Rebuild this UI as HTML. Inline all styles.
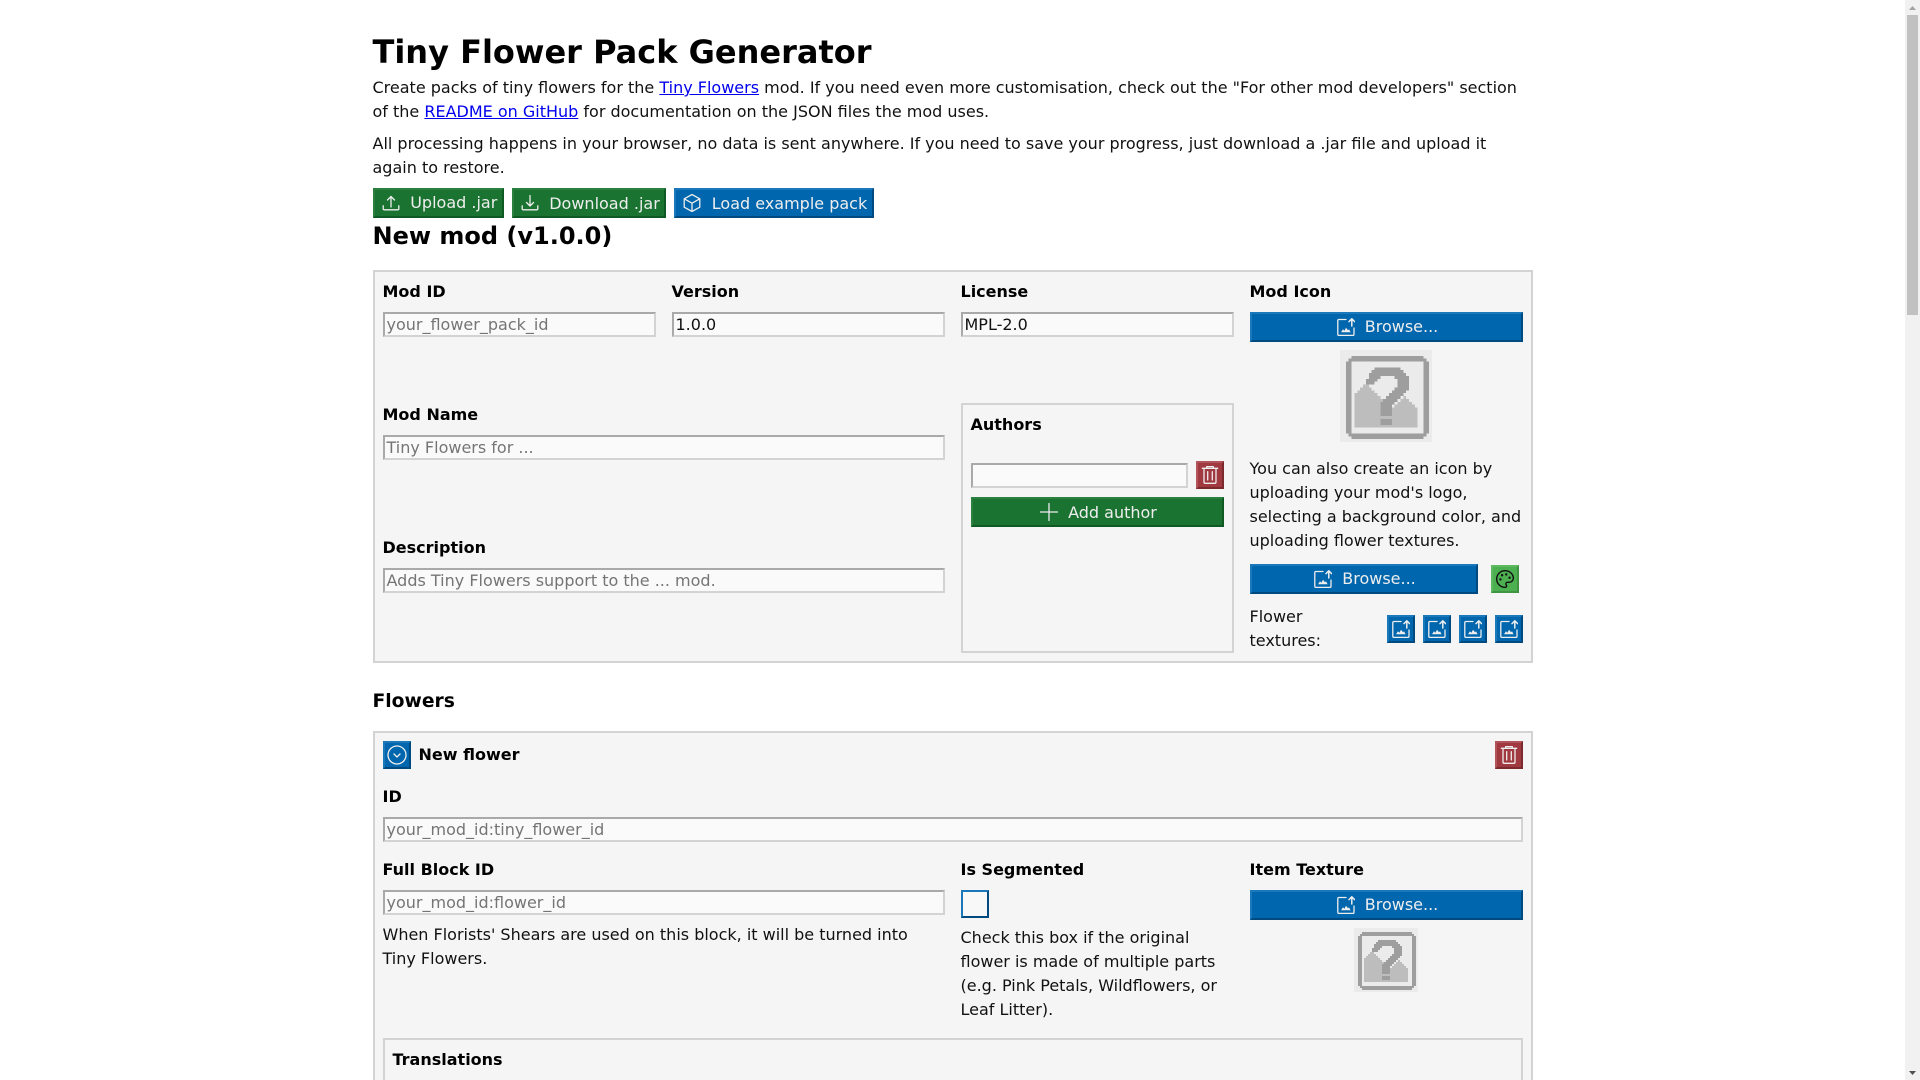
<!DOCTYPE html>
<html lang="en">
<head>
<meta charset="utf-8">
<title>Tiny Flower Pack Generator</title>
<style>
html,body{margin:0;padding:0;width:1920px;height:1080px;overflow:hidden;background:#fff}
body{font-family:"DejaVu Sans","Liberation Sans",sans-serif;font-size:16px;line-height:24px;color:#111;position:relative}
#c{position:absolute;left:372.5px;top:0;width:1160px;height:1080px}
#c>div,.p>div,.a{position:absolute;white-space:nowrap}
.b{font-weight:700;color:#000}
.p{box-sizing:border-box;border:2px solid #d3d3d3;background:#f5f5f5;position:absolute}
.i{box-sizing:border-box;height:25px;border:2px solid;border-color:#a9a9a9 #d3d3d3 #d3d3d3 #a9a9a9;background:#fafafa;padding-left:2px;line-height:21px;color:#757575}
.v{color:#111}
.btn{box-sizing:border-box;display:flex;align-items:center;justify-content:center;gap:10px;padding-left:3px;height:30px;border:2px solid;color:#eee;line-height:24px}
.g{background:#1b7331;border-color:#2b8040 #0e5a22 #0e5a22 #2b8040}
.bl{background:#0066ad;border-color:#1a78bb #004a80 #004a80 #1a78bb}
.r{background:#a13a40;border-color:#b2545a #7d2a2f #7d2a2f #b2545a}
.lg{background:#4caf50;border-color:#5dba61 #3f9543 #3f9543 #5dba61}
.sq{width:28px;height:28px;gap:0;padding:0}
.dn{position:relative;top:1px}
svg{display:block;flex:none}
.st{fill:none;stroke:#eee;stroke-width:1.3;stroke-linecap:round;stroke-linejoin:round}
a{color:#00e}
#sb{position:absolute;left:1905px;top:0;width:15px;height:1080px;background:#f1f1f1}
</style>
</head>
<body>
<svg width="0" height="0" style="position:absolute">
<defs>
<symbol id="ph" viewBox="0 0 32 32" shape-rendering="crispEdges">
<rect width="32" height="32" fill="#ebebeb"/>
<path fill="#bdbdbd" d="M5 27V15H6V14H7V13H8V12H10V13H11V14H12V15H13V16H14V17H15V18H16V19H17V20H19V19H20V18H21V17H22V16H23V17H24V18H25V19H26V20H27V27Z"/>
<path fill="#9e9e9e" fill-rule="evenodd" d="M4 2H29V3H30V4H31V29H30V30H29V31H4V30H3V29H2V4H3V3H4ZM4 4V29H29V4Z"/>
<path fill="#9e9e9e" d="M12 6h9v1h-9zM11 7h11v1h-11zM10 8h13v1h-13zM10 9h4v1h-4zM19 9h5v1h-5zM9 10h4v1h-4zM20 10h4v1h-4zM9 11h3v1h-3zM20 11h4v1h-4zM20 12h4v1h-4zM19 13h5v1h-5zM18 14h5v1h-5zM17 15h5v1h-5zM16 16h5v1h-5zM15 17h5v1h-5zM14 18h5v1h-5zM14 19h4v4h-4zM14 24h4v2h-4z"/>
</symbol>
<symbol id="up" viewBox="0 0 18 18">
<path class="st" d="M9 1.500H1.800a1 1 0 0 0-1 1V16.400a1 1 0 0 0 1 1H16a1 1 0 0 0 1-1V10"/>
<path class="st" style="stroke-width:1.5" d="M14.800 8V.8M12 3.600L14.800 .8l2.800 2.800"/>
<path fill="#eee" d="M4 14.200l2-3 1.400 1.600 1.600-3 2 2.500 1-1 1.600 2.900z"/>
</symbol>
<symbol id="tr" viewBox="0 0 24 24">
<path class="st" d="M4.300 5.300H19.700M8.700 5.300V3.600h6.600v1.700M6 5.300V19a1.300 1.300 0 0 0 1.300 1.300h9.400A1.300 1.300 0 0 0 18 19V5.300M9.700 8.700V17M14.300 8.700V17"/>
</symbol>
</defs>
</svg>

<div id="c">
<div class="b" style="left:0;top:33px;font-size:32px;line-height:38px">Tiny Flower Pack Generator</div>
<div style="left:0;top:76px">Create packs of tiny flowers for the <a href="#">Tiny Flowers</a> mod. If you need even more customisation, check out the "For other mod developers" section</div>
<div style="left:0;top:100px">of the <a href="#">README on GitHub</a> for documentation on the JSON files the mod uses.</div>
<div style="left:0;top:132px">All processing happens in your browser, no data is sent anywhere. If you need to save your progress, just download a .jar file and upload it</div>
<div style="left:0;top:156px">again to restore.</div>

<div class="btn g" style="left:0;top:188px;width:131.5px;"><svg width="18" height="18" viewBox="0 0 18 18"><path class="st" d="M9 13V2.500M5.500 6L9 2.500 12.500 6M1.200 11.800v3a1 1 0 0 0 1 1h13.600a1 1 0 0 0 1-1v-3"/></svg><span>Upload .jar</span></div>
<div class="btn g" style="left:139.5px;top:188px;width:154px"><svg width="18" height="18" viewBox="0 0 18 18"><path class="st" d="M9 1.500V12M5.500 8.500L9 12l3.500-3.500M1.200 11.800v3a1 1 0 0 0 1 1h13.600a1 1 0 0 0 1-1v-3"/></svg><span class="dn">Download .jar</span></div>
<div class="btn bl" style="left:301.5px;top:188px;width:200px"><svg width="18" height="18" viewBox="0 0 18 18" style="position:relative;left:-1px"><path class="st" d="M9 .5L16.800 4.800V13.200L9 17.500 1.200 13.200V4.800ZM1.200 4.800L9 9.200 16.800 4.800M9 9.200V17.500"/></svg><span class="dn">Load example pack</span></div>

<div class="b" style="left:0;top:222px;font-size:24px;line-height:28px">New mod (v1.0.0)</div>

<div class="p" style="left:0;top:270px;width:1160px;height:393px"></div>
<div class="b" style="left:10px;top:280px">Mod ID</div>
<div class="b" style="left:299px;top:280px">Version</div>
<div class="b" style="left:588px;top:280px">License</div>
<div class="b" style="left:877px;top:280px">Mod Icon</div>
<div class="i" style="left:10px;top:312px;width:273px">your_flower_pack_id</div>
<div class="i v" style="left:299px;top:312px;width:273px">1.0.0</div>
<div class="i v" style="left:588px;top:312px;width:273px">MPL-2.0</div>
<div class="btn bl" style="left:877px;top:312px;width:273px"><svg width="18" height="18"><use href="#up"/></svg><span>Browse...</span></div>
<svg class="a" style="position:absolute;left:967px;top:350px" width="92" height="92"><use href="#ph"/></svg>
<div style="left:877px;top:457px">You can also create an icon by</div>
<div style="left:877px;top:481px">uploading your mod's logo,</div>
<div style="left:877px;top:505px">selecting a background color, and</div>
<div style="left:877px;top:529px">uploading flower textures.</div>
<div class="btn bl" style="left:877px;top:564px;width:228px"><svg width="18" height="18"><use href="#up"/></svg><span>Browse...</span></div>
<div class="btn lg sq" style="left:1118.5px;top:565px"><svg width="20" height="20" viewBox="0 0 24 24" fill="none" stroke="#111" stroke-width="1.7" stroke-linecap="round" stroke-linejoin="round"><path d="M12 22a1 1 0 0 1 0-20 10 9 0 0 1 10 9 5 5 0 0 1-5 5h-2.250a1.750 1.750 0 0 0-1.400 2.800l.3.4a1.750 1.750 0 0 1-1.400 2.800z"/><circle cx="13.500" cy="6.500" r=".6" fill="#111"/><circle cx="17.500" cy="10.500" r=".6" fill="#111"/><circle cx="6.500" cy="12.500" r=".6" fill="#111"/><circle cx="8.500" cy="7.500" r=".6" fill="#111"/></svg></div>
<div style="left:877px;top:605px">Flower</div>
<div style="left:877px;top:629px">textures:</div>
<div class="btn bl sq" style="left:1014.5px;top:615px"><svg width="18" height="18"><use href="#up"/></svg></div>
<div class="btn bl sq" style="left:1050.5px;top:615px"><svg width="18" height="18"><use href="#up"/></svg></div>
<div class="btn bl sq" style="left:1086.5px;top:615px"><svg width="18" height="18"><use href="#up"/></svg></div>
<div class="btn bl sq" style="left:1122.5px;top:615px"><svg width="18" height="18"><use href="#up"/></svg></div>

<div class="b" style="left:10px;top:403px">Mod Name</div>
<div class="i" style="left:10px;top:435px;width:562px">Tiny Flowers for ...</div>
<div class="b" style="left:10px;top:536px">Description</div>
<div class="i" style="left:10px;top:568px;width:562px">Adds Tiny Flowers support to the ... mod.</div>

<div class="p" style="left:588px;top:403px;width:273px;height:250px"></div>
<div class="b" style="left:598px;top:413px">Authors</div>
<div class="i" style="left:598px;top:463px;width:217px"></div>
<div class="btn r sq" style="left:823.5px;top:461px"><svg width="24" height="24"><use href="#tr"/></svg></div>
<div class="btn g" style="left:598px;top:497px;width:253px;gap:9px;padding-left:2px"><svg width="20" height="20" viewBox="0 0 20 20"><path class="st" d="M10 1.500V18.500M1.500 10H18.500"/></svg><span class="dn">Add author</span></div>

<div class="b" style="left:0;top:691px;font-size:18.72px;line-height:22px">Flowers</div>

<div class="p" style="left:0;top:731px;width:1160px;height:360px"></div>
<div class="btn bl sq" style="left:10.5px;top:741px"><svg width="22" height="22" viewBox="0 0 22 22"><circle class="st" cx="11" cy="11" r="9"/><path class="st" d="M8 10l3 3 3-3"/></svg></div>
<div class="b" style="left:46px;top:743px">New flower</div>
<div class="btn r sq" style="left:1122.5px;top:741px"><svg width="24" height="24"><use href="#tr"/></svg></div>
<div class="b" style="left:10px;top:785px">ID</div>
<div class="i" style="left:10px;top:817px;width:1140px">your_mod_id:tiny_flower_id</div>
<div class="b" style="left:10px;top:858px">Full Block ID</div>
<div class="i" style="left:10px;top:890px;width:562px">your_mod_id:flower_id</div>
<div style="left:10px;top:923px">When Florists' Shears are used on this block, it will be turned into</div>
<div style="left:10px;top:947px">Tiny Flowers.</div>
<div class="b" style="left:588px;top:858px">Is Segmented</div>
<div style="left:588.5px;top:890px;width:24px;height:24px;box-sizing:content-box;border:2px solid;border-color:#1a78bb #004a80 #004a80 #1a78bb;background:#f8f8f8"></div>
<div style="left:588px;top:926px">Check this box if the original</div>
<div style="left:588px;top:950px">flower is made of multiple parts</div>
<div style="left:588px;top:974px">(e.g. Pink Petals, Wildflowers, or</div>
<div style="left:588px;top:998px">Leaf Litter).</div>
<div class="b" style="left:877px;top:858px">Item Texture</div>
<div class="btn bl" style="left:877px;top:890px;width:273px"><svg width="18" height="18"><use href="#up"/></svg><span>Browse...</span></div>
<svg style="position:absolute;left:981.5px;top:928px" width="64" height="64"><use href="#ph"/></svg>
<div class="p" style="left:10px;top:1038px;width:1140px;height:60px"></div>
<div class="b" style="left:20px;top:1048px">Translations</div>
</div>

<div id="sb">
<svg width="15" height="15" style="position:absolute;left:0;top:0"><path d="M4 10L7.500 6 11 10Z" fill="#a3a3a3"/></svg>
<div style="position:absolute;left:2px;top:15px;width:11px;height:300px;background:#c1c1c1"></div>
<svg width="15" height="15" style="position:absolute;left:0;top:1065px"><path d="M4 6L7.500 10 11 6Z" fill="#505050"/></svg>
</div>
</body>
</html>
